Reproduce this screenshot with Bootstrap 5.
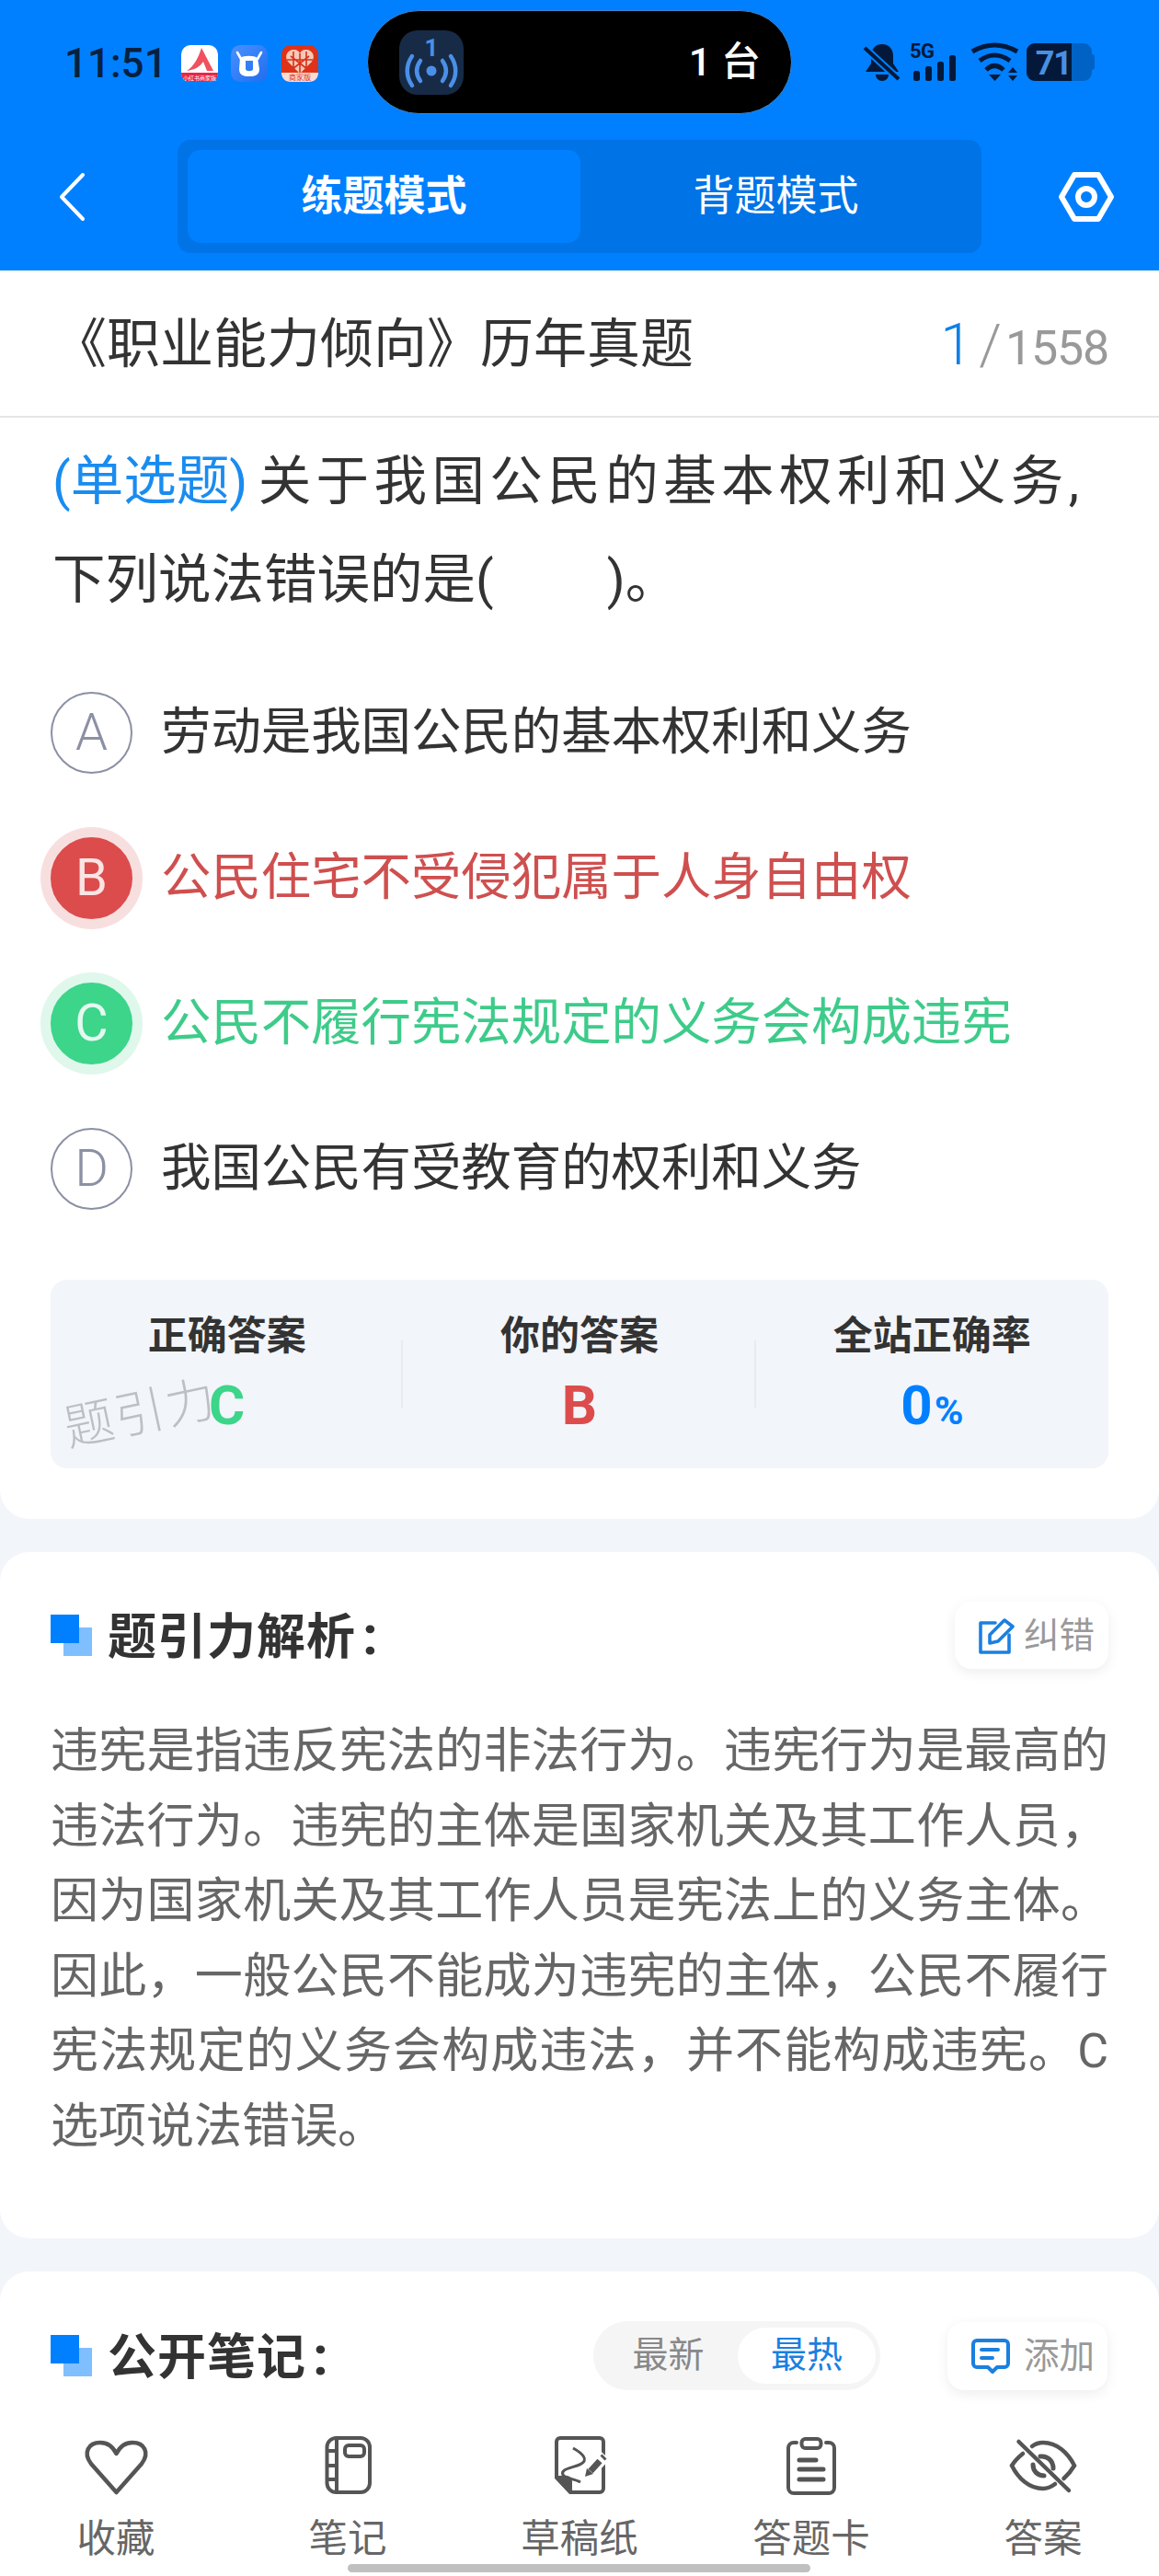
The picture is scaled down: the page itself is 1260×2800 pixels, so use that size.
<!DOCTYPE html>
<html lang="zh-CN">
<head>
  <meta charset="UTF-8">
  <meta name="viewport" content="width=device-width, initial-scale=1">
  <title>练题模式</title>
  <link href="https://cdn.jsdelivr.net/npm/bootstrap@5.3.3/dist/css/bootstrap.min.css" rel="stylesheet">
  <style>
    html, body { overflow: hidden; }
    body { width: 1260px; height: 2800px; background: #f2f5f9; font-family: Roboto, "Noto Sans CJK SC", sans-serif; color: #333; }
    svg { display: block; flex: none; overflow: visible; }

    /* 顶部蓝色区域 */
    .top-area { background: #0080ff; height: 294px; }
    .status-row { height: 124px; padding: 11px 0 0 70px; }
    .status-left { width: 329px; padding-top: 2px; }
    .clock { font-size: 44px; font-weight: 500; color: #06213f; width: 127px; line-height: 1; }
    .island { width: 462px; height: 113px; background: #000; border: 1px solid #3d86d0; border-radius: 57px; padding: 0 33px 0 34px; }
    .island-tile { width: 70px; height: 70px; }
    .island-text { color: #fff; font-size: 43px; font-weight: 500; }
    .status-right { margin-left: 78px; }
    .mode-row { height: 170px; padding: 28px 0 19px 64px; }
    .mode-switch { width: 874px; height: 123px; margin: 0 83px 0 101px; padding: 11px; background: #0073e6; border-radius: 14px; }
    .mode-item { font-size: 45px; color: #fff; border-radius: 14px; width: 427px; }
    .mode-item.on { background: #0080ff; font-weight: 700; }
    .mode-item.off { flex: 1; }

    /* 标题行 */
    .paper-row { height: 160px; padding: 2px 55px 0 58px; background: #fff; border-bottom: 2px solid #e5e5e5; }
    .paper-title { font-size: 58px; line-height: 1; }
    .num-now { font-size: 63px; color: #0f80e8; line-height: 1; font-weight: 300; }
    .num-sep { font-size: 62px; color: #999; font-weight: 300; margin: 0 4px 0 7px; line-height: 1; }
    .num-all { font-size: 52px; color: #999; line-height: 1; letter-spacing: -1.2px; }

    .panel-top { background: #fff; padding: 16px 55px 55px 55px; border-radius: 0 0 32px 32px; }
    .panel { background: #fff; margin-top: 36px; border-radius: 32px; padding: 54px 55px 80px 55px; }
    .panel-last { background: #fff; margin-top: 36px; border-radius: 32px 32px 0 0; padding-top: 55px; height: 332px; }
    .question { font-size: 57.5px; line-height: 107px; margin: 0 0 0 2px; }
    .q-first { display: block; padding-right: 32px; text-align: justify; text-align-last: justify; }
    .q-type { display: inline-block; color: #1a8cf0; margin-right: 6px; }
    .q-blank { display: inline-block; width: 123px; }

    /* 选项 */
    .opt-list { margin-top: 33px; }
    .opt-row { height: 158px; gap: 31px; font-size: 54.4px; }
    .opt-dot { width: 89px; height: 89px; border-radius: 50%; flex: none; font-size: 56px; font-weight: 300; border: 2px solid #8c90a5; color: #8c90a5; }
    .opt-wrong { color: #cf4f4f; }
    .opt-wrong .opt-dot { background: #dc4c4c; border-color: #dc4c4c; color: #fbe4e4; font-weight: 400; box-shadow: 0 0 0 11px #f8dfdf; }
    .opt-right { color: #3ecb8a; }
    .opt-right .opt-dot { background: #3cd58a; border-color: #3cd58a; color: #e4f9ef; font-weight: 400; box-shadow: 0 0 0 11px #e0f7ec; }

    /* 答案统计 */
    .stat-box { margin-top: 42px; height: 205px; background: #f2f5f9; border-radius: 18px; padding-top: 34px; }
    .stat-col { height: 171px; }
    .stat-col + .stat-col::before { content: ""; position: absolute; left: -2px; top: 32px; height: 73px; width: 2px; background: #e8ebef; }
    .stat-label { font-size: 43px; font-weight: 700; line-height: 54px; }
    .stat-value { font-size: 60px; font-weight: 700; line-height: 70px; margin-top: 14px; }
    .stat-value small { font-size: 43px; font-weight: 700; margin-left: 2px; }
    .water-mark { position: absolute; left: 13px; top: 116px; width: 170px; font-size: 54px; line-height: 60px; color: #bdbfc3; font-weight: 300; letter-spacing: 2px; transform: rotate(-12deg); white-space: nowrap; }

    /* 解析 */
    .sect-mark { position: relative; width: 45px; height: 45px; flex: none; margin-right: 17px; }
    .sect-mark::before { content: ""; position: absolute; right: 0; bottom: 0; width: 31px; height: 31px; background: #80bfff; }
    .sect-mark::after { content: ""; position: absolute; left: 0; top: 0; width: 31px; height: 31px; background: #0080ff; }
    .sect-title { font-size: 53px; font-weight: 700; line-height: 1; letter-spacing: 1px; }
    .sect-colon { font-size: 60px; margin-left: 7px; line-height: 1; }
    .tool-btn { width: 167px; height: 73px; padding-left: 25px; background: #fff; border-radius: 18px; box-shadow: 0 4px 14px rgba(0,0,0,.07); font-size: 38.5px; color: #999; }
    .analysis { font-size: 52px; line-height: 81.6px; color: #666; text-align: justify; margin: 49px 0 0; }

    /* 公开笔记 */
    .note-head { padding: 0 56px 0 55px; height: 74px; }
    .sort-box { width: 312px; height: 75px; background: #f5f5f5; border-radius: 38px; margin-right: 73px; padding: 7px 5px 7px 6px; font-size: 39px; color: #888; }
    .sort-box span { flex: 1; }
    .sort-box .sort-on { flex: none; width: 150px; height: 61px; background: #fff; border-radius: 31px; color: #1a80e0; }

    /* 底部栏 */
    .bottom-bar { margin-top: 46px; }
    .bar-item { width: 252px; font-size: 42.5px; line-height: 56px; color: #666; }
    .bar-item svg { margin-bottom: 18px; }
    .home-line { position: absolute; left: 378px; top: 2787px; width: 503px; height: 9px; background: #c0c0c0; border-radius: 5px; }
  </style>
</head>
<body class="position-relative">

  <div class="top-area">
    <div class="status-row d-flex">
      <div class="status-left d-flex align-items-center">
        <div class="clock">11:51</div>
        <!-- 通知图标 -->
        <svg width="40" height="40" viewBox="0 0 40 40">
          <rect width="40" height="40" rx="10" fill="#fff"/>
          <path d="M22 3 L35 28 H28 L24 18 C20 24 14 27 6 28 C14 23 19 13 22 3Z" fill="#f0505f"/>
          <path d="M0 30 H40 C40 36 36 40 30 40 H10 C4 40 0 36 0 30Z" fill="#e8264a"/>
          <text x="20" y="38" font-size="6" fill="#fff" text-anchor="middle" font-family="Noto Sans CJK SC">小红书商家版</text>
        </svg>
        <svg width="40" height="40" viewBox="0 0 40 40" style="margin-left:14px">
          <defs>
            <linearGradient id="cowBg" x1="0" y1="0" x2="1" y2="1">
              <stop offset="0" stop-color="#4a90ff"/>
              <stop offset="1" stop-color="#1f6ef0"/>
            </linearGradient>
          </defs>
          <rect width="40" height="40" rx="10" fill="url(#cowBg)"/>
          <path d="M10 14 C14 11 25 11 29 14 L31 26 C31 34 24 34 20 34 C16 34 9 34 9 26Z M16 17 V26 C16 29 24 29 24 26 V17Z" fill="#fff" fill-rule="evenodd"/>
          <path d="M11 15 L7 8 M29 15 L33 8" stroke="#fff" stroke-width="2.6" stroke-linecap="round"/>
        </svg>
        <svg width="40" height="40" viewBox="0 0 40 40" style="margin-left:15px">
          <rect width="40" height="40" rx="10" fill="#dd3318"/>
          <path d="M20 31 L7 18 C2 11 8 4 14 5 C17 5 19 7 20 9 C21 7 23 5 26 5 C32 4 38 11 33 18Z" fill="#f6c9b8"/>
          <path d="M20 9 V31 M10 12 L28 26 M30 12 L12 26 M6 16 H34 M13 7 V24 M27 7 V24" stroke="#d8321a" stroke-width="1.6"/>
          <path d="M0 30 H40 C40 36 36 40 30 40 H10 C4 40 0 36 0 30Z" fill="#fbdcd2"/>
          <text x="20" y="38" font-size="8" fill="#d8321a" text-anchor="middle" font-family="Noto Sans CJK SC">商家版</text>
        </svg>
      </div>

      <div class="island d-flex align-items-center justify-content-between">
        <svg class="island-tile" viewBox="0 0 70 70">
          <rect width="70" height="70" rx="20" fill="#172b47"/>
          <text x="35" y="28" font-size="26" font-weight="700" fill="#4a90e8" text-anchor="middle" font-family="Roboto">1</text>
          <circle cx="35" cy="44" r="5.5" fill="#4a90e8"/>
          <path d="M23 33 C18 40 18 48 23 55 M47 33 C52 40 52 48 47 55" stroke="#4a90e8" stroke-width="4.5" fill="none" stroke-linecap="round"/>
          <path d="M14 28 C7 38 7 50 14 60 M56 28 C63 38 63 50 56 60" stroke="#4a90e8" stroke-width="4.5" fill="none" stroke-linecap="round"/>
        </svg>
        <span class="island-text">1 台</span>
      </div>

      <div class="status-right d-flex" style="padding-top:36px">
        <svg width="40" height="42" viewBox="0 0 40 42">
          <path d="M20 1 C12 1 8 7 8 14 V22 L2 31 H38 L32 22 V14 C32 7 28 1 20 1Z" fill="#04193a"/>
          <path d="M13 34 H27 C27 38 24 41 20 41 C16 41 13 38 13 34Z" fill="#04193a"/>
          <path d="M1 5 L38 39" stroke="#0080ff" stroke-width="8"/>
          <path d="M1 5 L38 39" stroke="#04193a" stroke-width="4"/>
        </svg>
        <svg width="50" height="42" viewBox="0 0 50 42" style="margin-left:11px">
          <text x="-1" y="16" font-size="22" font-weight="700" fill="#04193a" font-family="Roboto" letter-spacing="-0.5">5G</text>
          <rect x="3" y="30" width="7" height="11" rx="2.5" fill="#04193a"/>
          <rect x="16" y="25" width="7" height="16" rx="2.5" fill="#04193a"/>
          <rect x="29" y="20" width="7" height="21" rx="2.5" fill="#04193a"/>
          <rect x="42" y="13" width="7" height="28" rx="2.5" fill="#04193a"/>
        </svg>
        <svg width="56" height="42" viewBox="0 0 56 42" style="margin-left:13px" fill="none" stroke="#04193a" stroke-width="5">
          <path d="M4 9 Q28 -5 53 9"/>
          <path d="M12 19 Q28 7 45 19"/>
          <path d="M19 29 Q28 20 38 29"/>
          <path d="M22 34 H35 L28.5 41Z M43 32 L48 26 L53 32Z M43 35 H53 L48 41Z" fill="#04193a" stroke="none"/>
        </svg>
        <svg width="74" height="42" viewBox="0 0 74 42" style="margin-left:7px">
          <rect x="68" y="12" width="6" height="17" rx="3" fill="#0062c4"/>
          <rect x="0" y="0" width="71" height="41" rx="9" fill="#0062c4"/>
          <path d="M49 0 H9 A9 9 0 0 0 0 9 V32 A9 9 0 0 0 9 41 H49Z" fill="#04193a"/>
          <text x="49" y="34" font-size="36" font-weight="700" fill="#4a90e0" text-anchor="end" font-family="Roboto" letter-spacing="-1">71</text>
        </svg>
      </div>
    </div>

    <div class="mode-row d-flex align-items-center">
      <svg width="28" height="52" viewBox="0 0 28 52" fill="none" stroke="#fff" stroke-width="4" stroke-linecap="round" stroke-linejoin="round">
        <path d="M26 2 L3 26 L26 50"/>
      </svg>
      <div class="mode-switch d-flex">
        <div class="mode-item on d-flex align-items-center justify-content-center">练题模式</div>
        <div class="mode-item off d-flex align-items-center justify-content-center">背题模式</div>
      </div>
      <svg width="62" height="56" viewBox="0 0 62 56" fill="none" stroke="#fff" stroke-width="6" stroke-linejoin="round">
        <path d="M18 4 H44 L58 28 L44 52 H18 L4 28Z"/>
        <circle cx="31" cy="28" r="9"/>
      </svg>
    </div>
  </div>

  <div class="paper-row d-flex align-items-center justify-content-between">
    <div class="paper-title">《职业能力倾向》历年真题</div>
    <div class="d-flex align-items-baseline">
      <span class="num-now">1</span><span class="num-sep">/</span><span class="num-all">1558</span>
    </div>
  </div>

  <div class="panel-top">
    <p class="question"><span class="q-first"><span class="q-type">(单选题)</span>关于我国公民的基本权利和义务,</span>下列说法错误的是(<span class="q-blank"></span>)。</p>

    <div class="opt-list">
      <div class="opt-row d-flex align-items-center">
        <div class="opt-dot d-flex align-items-center justify-content-center">A</div>
        <div>劳动是我国公民的基本权利和义务</div>
      </div>
      <div class="opt-row opt-wrong d-flex align-items-center">
        <div class="opt-dot d-flex align-items-center justify-content-center">B</div>
        <div>公民住宅不受侵犯属于人身自由权</div>
      </div>
      <div class="opt-row opt-right d-flex align-items-center">
        <div class="opt-dot d-flex align-items-center justify-content-center">C</div>
        <div>公民不履行宪法规定的义务会构成违宪</div>
      </div>
      <div class="opt-row d-flex align-items-center">
        <div class="opt-dot d-flex align-items-center justify-content-center">D</div>
        <div>我国公民有受教育的权利和义务</div>
      </div>
    </div>

    <div class="stat-box row g-0 text-center position-relative">
      <div class="stat-col col-4 position-relative">
        <div class="stat-label">正确答案</div>
        <div class="stat-value" style="color:#3cd58a">C</div>
      </div>
      <div class="stat-col col-4 position-relative">
        <div class="stat-label">你的答案</div>
        <div class="stat-value" style="color:#dc4c4c">B</div>
      </div>
      <div class="stat-col col-4 position-relative">
        <div class="stat-label">全站正确率</div>
        <div class="stat-value" style="color:#0080ff">0<small>%</small></div>
      </div>
      <div class="water-mark">题引力</div>
    </div>
  </div>

  <div class="panel">
    <div class="d-flex align-items-center justify-content-between">
      <div class="d-flex align-items-center">
        <div class="sect-mark"></div>
        <div class="sect-title">题引力解析<span class="sect-colon">:</span></div>
      </div>
      <div class="tool-btn d-flex align-items-center">
        <svg width="40" height="40" viewBox="0 0 40 40" fill="none" stroke="#1a80e0" stroke-width="3.6" stroke-linejoin="round" stroke-linecap="round" style="margin-right:10px">
          <path d="M19 6 H3 V38 H34 V19"/>
          <path d="M13 19 L29 3 L38 10 L22 26 L13 28Z"/>
        </svg>
        <span>纠错</span>
      </div>
    </div>
    <p class="analysis">违宪是指违反宪法的非法行为。违宪行为是最高的违法行为。违宪的主体是国家机关及其工作人员，因为国家机关及其工作人员是宪法上的义务主体。因此，一般公民不能成为违宪的主体，公民不履行宪法规定的义务会构成违法，并不能构成违宪。C选项说法错误。</p>
  </div>

  <div class="panel-last">
    <div class="note-head d-flex align-items-center">
      <div class="sect-mark"></div>
      <div class="sect-title me-auto">公开笔记<span class="sect-colon">:</span></div>
      <div class="sort-box d-flex align-items-center text-center">
        <span>最新</span>
        <span class="sort-on d-flex align-items-center justify-content-center">最热</span>
      </div>
      <div class="tool-btn d-flex align-items-center" style="width:174px;height:74px">
        <svg width="44" height="40" viewBox="0 0 44 40" fill="none" stroke="#1a80e0" stroke-width="4" stroke-linejoin="round" stroke-linecap="round" style="margin-right:14px">
          <path d="M7 3 H37 A4 4 0 0 1 41 7 V28 A4 4 0 0 1 37 32 H29 L24 37 L19 32 H7 A4 4 0 0 1 3 28 V7 A4 4 0 0 1 7 3Z"/>
          <path d="M12 13 H30 M12 22 H24"/>
        </svg>
        <span>添加</span>
      </div>
    </div>

    <div class="bottom-bar d-flex text-center">
      <div class="bar-item d-flex flex-column align-items-center">
        <svg width="80" height="70" viewBox="0 0 80 70" fill="none" stroke="#555" stroke-width="4.5" stroke-linejoin="round">
          <path d="M40.5 65 L13 34 C4 22 10 11 23 11 C31 11 37 16 40.5 23 C44 16 50 11 58 11 C71 11 77 22 68 34Z"/>
        </svg>
        <span>收藏</span>
      </div>
      <div class="bar-item d-flex flex-column align-items-center">
        <svg width="80" height="70" viewBox="0 0 80 70" fill="none" stroke="#555" stroke-width="4">
          <rect x="17.5" y="6" width="46.5" height="59" rx="10"/>
          <path d="M28 6 V65 M17.5 20 H28 M17.5 36 H28 M17.5 51 H28"/>
          <rect x="37" y="14" width="21" height="12" rx="4"/>
        </svg>
        <span>笔记</span>
      </div>
      <div class="bar-item d-flex flex-column align-items-center">
        <svg width="80" height="70" viewBox="0 0 80 70" fill="none" stroke="#555" stroke-width="4" stroke-linejoin="round">
          <path d="M15 49 V10 A4 4 0 0 1 19 6 H62 A4 4 0 0 1 66 10 V61 A4 4 0 0 1 62 65 H30Z"/>
          <path d="M15 49 H26 A4 4 0 0 1 30 53 V65Z" fill="#555"/>
          <path d="M33 17 C42 22 52 30 40 35 C30 39 19 40 22 46 C24 50 34 50 41 54" stroke-width="3"/>
          <path d="M50 44 L68 25" stroke="#fff" stroke-width="13"/>
          <path d="M52 42 L62 31" stroke-width="7"/>
          <path d="M65 28 L67 26" stroke-width="7"/>
          <path d="M46 48 L48 39 L55 45Z" fill="#555" stroke="none"/>
        </svg>
        <span>草稿纸</span>
      </div>
      <div class="bar-item d-flex flex-column align-items-center">
        <svg width="80" height="70" viewBox="0 0 80 70" fill="none" stroke="#555" stroke-width="4" stroke-linecap="round">
          <path d="M24 11 H21 A6 6 0 0 0 15 17 V60 A6 6 0 0 0 21 66 H59 A6 6 0 0 0 65 60 V17 A6 6 0 0 0 59 11 H56"/>
          <rect x="29.5" y="7" width="21" height="10" rx="4"/>
          <path d="M27 30 H45 M27 40 H53 M27 51 H53" stroke-width="5"/>
        </svg>
        <span>答题卡</span>
      </div>
      <div class="bar-item d-flex flex-column align-items-center">
        <svg width="80" height="70" viewBox="0 0 80 70" fill="none" stroke="#555" stroke-width="4.5" stroke-linecap="round">
          <path d="M28 15 C32 12 36 11 40 11 C55 11 67 22 74 36 C71 41 67 46 62.5 50"/>
          <path d="M18 23 C13 27 9 31 6 36 C13 50 25 61 40 61 C45 61 49 59 53 56"/>
          <path d="M37 26 C45 25 51 31 51 39 M29 35 C29 42 34 47 41 47" stroke-width="5"/>
          <path d="M13.5 10 L68 63"/>
        </svg>
        <span>答案</span>
      </div>
    </div>
  </div>

  <div class="home-line"></div>

  <script src="https://cdn.jsdelivr.net/npm/bootstrap@5.3.3/dist/js/bootstrap.bundle.min.js"></script>
</body>
</html>
